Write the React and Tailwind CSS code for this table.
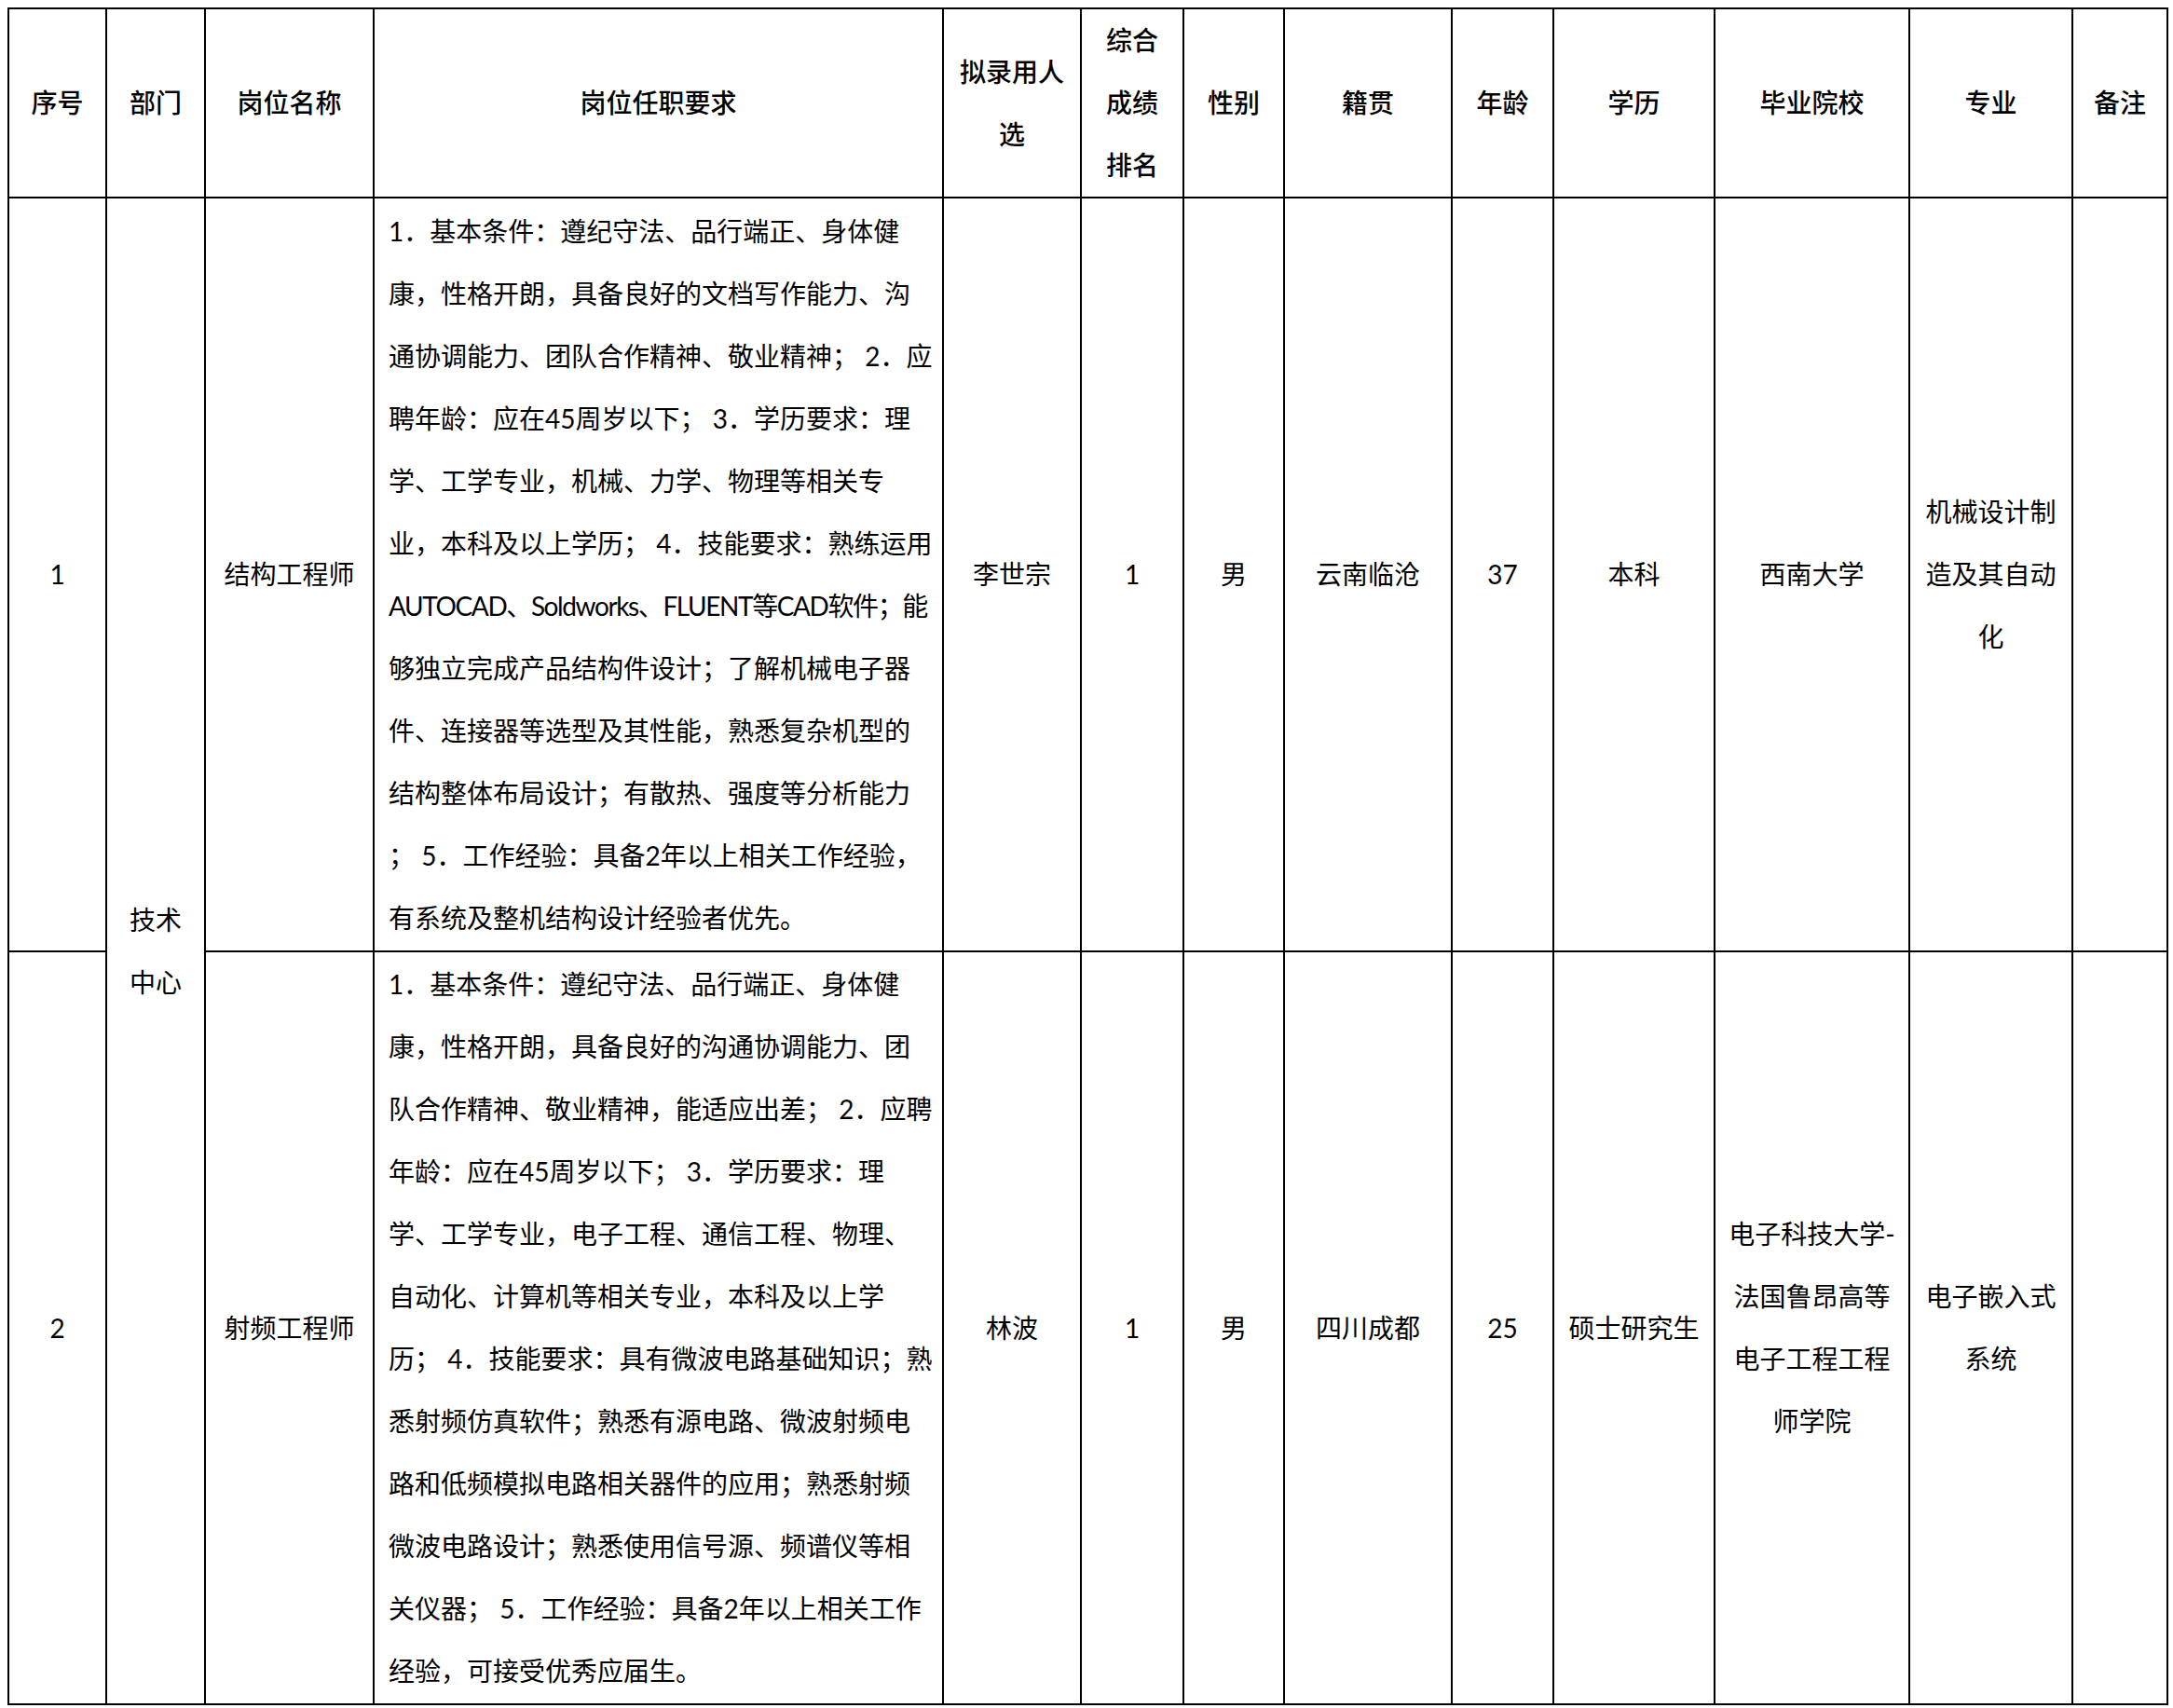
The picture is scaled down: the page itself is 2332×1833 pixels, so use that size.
const COLS = [105, 106, 181, 611, 148, 110, 108, 180, 109, 173, 209, 175, 102];

const HEADERS = [
  ["序号"], ["部门"], ["岗位名称"], ["岗位任职要求"], ["拟录用人", "选"],
  ["综合", "成绩", "排名"], ["性别"], ["籍贯"], ["年龄"], ["学历"],
  ["毕业院校"], ["专业"], ["备注"],
];

const ROWS = [
  {
    no: "1",
    title: "结构工程师",
    req: [
      "1．基本条件：遵纪守法、品行端正、身体健",
      "康，性格开朗，具备良好的文档写作能力、沟",
      "通协调能力、团队合作精神、敬业精神； 2．应",
      "聘年龄：应在45周岁以下； 3．学历要求：理",
      "学、工学专业，机械、力学、物理等相关专",
      "业，本科及以上学历； 4．技能要求：熟练运用",
      "AUTOCAD、Soldworks、FLUENT等CAD软件；能",
      "够独立完成产品结构件设计；了解机械电子器",
      "件、连接器等选型及其性能，熟悉复杂机型的",
      "结构整体布局设计；有散热、强度等分析能力",
      "； 5．工作经验：具备2年以上相关工作经验，",
      "有系统及整机结构设计经验者优先。",
    ],
    name: "李世宗",
    rank: "1",
    sex: "男",
    origin: "云南临沧",
    age: "37",
    edu: "本科",
    school: ["西南大学"],
    major: ["机械设计制", "造及其自动", "化"],
    h: "h-[809px]",
  },
  {
    no: "2",
    title: "射频工程师",
    req: [
      "1．基本条件：遵纪守法、品行端正、身体健",
      "康，性格开朗，具备良好的沟通协调能力、团",
      "队合作精神、敬业精神，能适应出差； 2．应聘",
      "年龄：应在45周岁以下； 3．学历要求：理",
      "学、工学专业，电子工程、通信工程、物理、",
      "自动化、计算机等相关专业，本科及以上学",
      "历； 4．技能要求：具有微波电路基础知识；熟",
      "悉射频仿真软件；熟悉有源电路、微波射频电",
      "路和低频模拟电路相关器件的应用；熟悉射频",
      "微波电路设计；熟悉使用信号源、频谱仪等相",
      "关仪器； 5．工作经验：具备2年以上相关工作",
      "经验，可接受优秀应届生。",
    ],
    name: "林波",
    rank: "1",
    sex: "男",
    origin: "四川成都",
    age: "25",
    edu: "硕士研究生",
    school: ["电子科技大学-", "法国鲁昂高等", "电子工程工程", "师学院"],
    major: ["电子嵌入式", "系统"],
    h: "h-[808px]",
  },
];

function Lines({ lines }) {
  return lines.map((l, i) => (
    // Latin-heavy line runs wide in Lato, tighten it a little
    <div key={i} className={`whitespace-nowrap ${l.startsWith("AUTOCAD") ? "tracking-[-1.4px]" : ""}`}>
      {l}
    </div>
  ));
}

const cell = "border-2 border-black text-center align-middle p-0";

export default function App() {
  return (
    <div className="min-h-screen bg-white pl-[8px] pt-[8px] font-[Lato,'Noto_Sans_CJK_SC',sans-serif] text-[28px] leading-[67px] text-black">
      <table className="table-fixed border-collapse w-[2319px]">
        <colgroup>
          {COLS.map((w, i) => <col key={i} style={{ width: w }} />)}
        </colgroup>
        <thead>
          <tr>
            {HEADERS.map((h, i) => (
              <td key={i} className={`${cell} h-[203px] font-medium`}>
                <Lines lines={h} />
              </td>
            ))}
          </tr>
        </thead>
        <tbody>
          {ROWS.map((r, idx) => (
            <tr key={r.no}>
              <td className={`${cell} ${r.h}`}>{r.no}</td>
              {idx === 0 && (
                <td rowSpan={2} className={cell}>
                  <div>技术</div>
                  <div>中心</div>
                </td>
              )}
              <td className={cell}>{r.title}</td>
              <td className="border-2 border-black align-middle pl-[15px] pr-[4px] text-left">
                <Lines lines={r.req} />
              </td>
              <td className={cell}>{r.name}</td>
              <td className={cell}>{r.rank}</td>
              <td className={cell}>{r.sex}</td>
              <td className={cell}>{r.origin}</td>
              <td className={cell}>{r.age}</td>
              <td className={cell}>{r.edu}</td>
              <td className={cell}><Lines lines={r.school} /></td>
              <td className={cell}><Lines lines={r.major} /></td>
              <td className={cell}></td>
            </tr>
          ))}
        </tbody>
      </table>
    </div>
  );
}
